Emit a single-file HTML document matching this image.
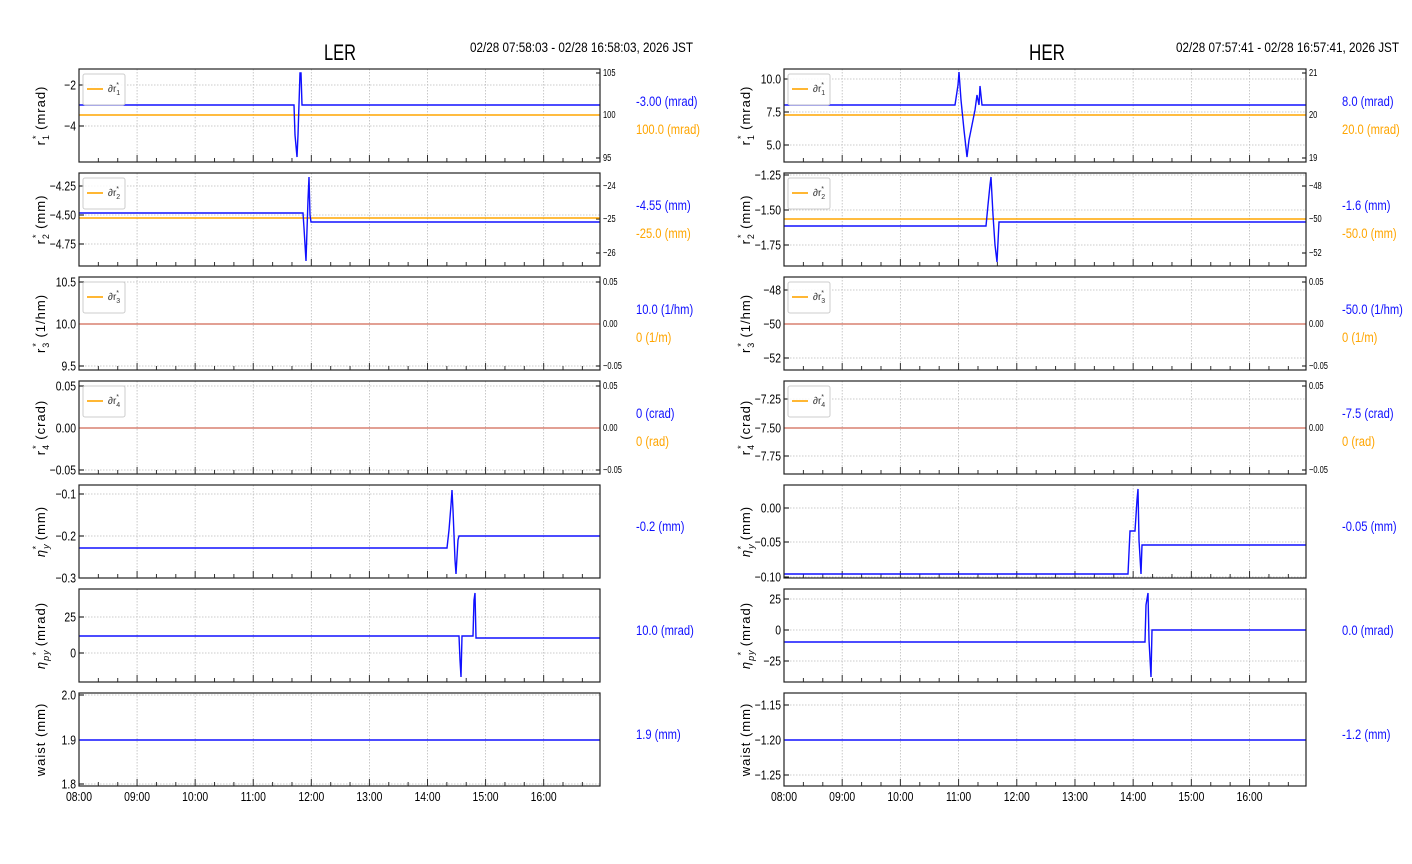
<!DOCTYPE html>
<html><head><meta charset="utf-8"><style>
html,body{margin:0;padding:0;background:#fff;width:1412px;height:864px;overflow:hidden}
svg text{font-family:"Liberation Sans",sans-serif}
</style></head><body>
<svg id="s" width="1412" height="864" xmlns="http://www.w3.org/2000/svg">
<text x="340" y="60" font-size="22" text-anchor="middle" textLength="32" lengthAdjust="spacingAndGlyphs">LER</text>
<text x="470" y="52" font-size="14" textLength="223" lengthAdjust="spacingAndGlyphs">02/28 07:58:03 - 02/28 16:58:03, 2026 JST</text>
<text x="1047" y="60" font-size="22" text-anchor="middle" textLength="36" lengthAdjust="spacingAndGlyphs">HER</text>
<text x="1176" y="52" font-size="14" textLength="223" lengthAdjust="spacingAndGlyphs">02/28 07:57:41 - 02/28 16:57:41, 2026 JST</text>
</svg>
<script>
var s=document.getElementById('s'),h='';
var tops=[69,173,277,381,485,589,693],PH=93;
function panel(x0,w,i,yt,rt,legend,ylab,lines,vals){
 var y0=tops[i],x1=x0+w,y1=y0+PH,hr=w/8.97;
 for(var k=0;k<9;k++){var x=x0+k*hr;h+='<line x1="'+x+'" y1="'+y0+'" x2="'+x+'" y2="'+y1+'" stroke="#bbb" stroke-width="0.8" stroke-dasharray="1.5,1.5"/>';}
 yt.forEach(function(t){h+='<line x1="'+x0+'" y1="'+t[1]+'" x2="'+x1+'" y2="'+t[1]+'" stroke="#bbb" stroke-width="0.8" stroke-dasharray="1.5,1.5"/>';
  h+='<line x1="'+x0+'" y1="'+t[1]+'" x2="'+(x0+5)+'" y2="'+t[1]+'" stroke="#000"/>';
  h+='<text x="'+(x0-3)+'" y="'+(t[1]+4.5)+'" font-size="13" text-anchor="end" transform="translate('+(x0-3)+',0) scale(0.8,1) translate('+(-(x0-3))+',0)">'+t[0]+'</text>';});
 for(var m=0;m<27;m++){var x=x0+m*hr/3;var L=m%3==0?7:4;h+='<line x1="'+x+'" y1="'+y1+'" x2="'+x+'" y2="'+(y1-L)+'" stroke="#333" stroke-width="1"/>';}
 if(rt){rt.forEach(function(t){h+='<line x1="'+x1+'" y1="'+t[1]+'" x2="'+(x1-4)+'" y2="'+t[1]+'" stroke="#000"/>';
  h+='<text x="'+(x1+3)+'" y="'+(t[1]+3)+'" font-size="10" transform="translate('+(x1+3)+',0) scale(0.75,1) translate('+(-(x1+3))+',0)">'+t[0]+'</text>';});}
 lines.forEach(function(l){h+='<polyline points="'+l[1]+'" fill="none" stroke="'+l[0]+'" stroke-width="1.4"/>';});
 if(legend){h+='<rect x="'+(x0+4)+'" y="'+(y0+5)+'" width="42" height="31" rx="2" fill="#fff" fill-opacity="0.85" stroke="#ccc"/>';
  h+='<line x1="'+(x0+8)+'" y1="'+(y0+20)+'" x2="'+(x0+24)+'" y2="'+(y0+20)+'" stroke="#ffa500" stroke-width="1.6"/>';
  h+='<text x="'+(x0+29)+'" y="'+(y0+23)+'" font-size="10" fill="#333">∂r<tspan font-size="7" dy="3">'+legend+'</tspan><tspan font-size="7" dx="-4" dy="-8">*</tspan></text>';}
 h+='<rect x="'+x0+'" y="'+y0+'" width="'+w+'" height="'+PH+'" fill="none" stroke="#222" stroke-width="1.2"/>';
 var cy=y0+PH/2,lx=x0-34;
 h+='<text font-size="13" text-anchor="middle" letter-spacing="1" transform="translate('+lx+','+cy+') rotate(-90)">'+ylab+'</text>';
 var off=vals.length==1?46:37;
 vals.forEach(function(v,j){h+='<text x="'+(x1+36)+'" y="'+(y0+off+j*28)+'" font-size="14" fill="'+v[1]+'" transform="translate('+(x1+36)+',0) scale(0.8,1) translate('+(-(x1+36))+',0)">'+v[0]+'</text>';});
}
var B='#1010ff',O='#ffa500',R='#d98070';
function r(n){return 'r<tspan font-size="9" dy="4">'+n+'</tspan><tspan font-size="9" dx="-5" dy="-10">*</tspan><tspan dy="6"> </tspan>';}
function eta(n){return '<tspan font-style="italic">η</tspan><tspan font-size="9" dy="4" font-style="italic">'+n+'</tspan><tspan font-size="9" dx="-6" dy="-10">*</tspan><tspan dy="6"> </tspan>';}
var L=79,W=521,Rx=784,RW=522;
panel(L,W,0,[['−2',85],['−4',126]],[['105',73],['100',115],['95',158]],'1',r(1)+'(mrad)',
 [[O,L+','+115+' '+(L+W)+',115'],[B,L+',105 294,105 295,135 297,157 298,135 300,73 301,73 302,105 600,105']],[['-3.00 (mrad)',B],['100.0 (mrad)',O]]);
panel(L,W,1,[['−4.25',186],['−4.50',215],['−4.75',244]],[['−24',186],['−25',219],['−26',253]],'2',r(2)+'(mm)',
 [[O,L+',218 600,218'],[B,L+',213 303,213 304,228 306,261 307,230 308,200 309,177 310,215 311,222 600,222']],[['-4.55 (mm)',B],['-25.0 (mm)',O]]);
panel(L,W,2,[['10.5',282],['10.0',324],['9.5',366]],[['0.05',282],['0.00',324],['−0.05',366]],'3',r(3)+'(1/hm)',
 [[R,L+',324 600,324']],[['10.0 (1/hm)',B],['0 (1/m)',O]]);
panel(L,W,3,[['0.05',386],['0.00',428],['−0.05',470]],[['0.05',386],['0.00',428],['−0.05',470]],'4',r(4)+'(crad)',
 [[R,L+',428 600,428']],[['0 (crad)',B],['0 (rad)',O]]);
panel(L,W,4,[['−0.1',494],['−0.2',536],['−0.3',578]],null,null,eta('y')+'(mm)',
 [[B,L+',548 447,548 449,530 451,505 452,490 453,510 455,560 456,574 458,540 459,536 600,536']],[['-0.2 (mm)',B]]);
panel(L,W,5,[['25',617],['0',653]],null,null,eta('py')+'(mrad)',
 [[B,L+',636 459,636 460,660 461,677 462,636 473,636 474,600 475,593 476,638 600,638']],[['10.0 (mrad)',B]]);
panel(L,W,6,[['2.0',695],['1.9',740],['1.8',784]],null,null,'waist (mm)',
 [[B,L+',740 600,740']],[['1.9 (mm)',B]]);
panel(Rx,RW,0,[['10.0',79],['7.5',112],['5.0',145]],[['21',73],['20',115],['19',158]],'1',r(1)+'(mrad)',
 [[O,Rx+',115 1306,115'],[B,Rx+',105 955,105 958,85 959,72 961,100 964,130 967,157 969,140 972,125 975,110 977,95 979,105 980,86 982,105 1306,105']],[['8.0 (mrad)',B],['20.0 (mrad)',O]]);
panel(Rx,RW,1,[['−1.25',175],['−1.50',210],['−1.75',245]],[['−48',186],['−50',219],['−52',253]],'2',r(2)+'(mm)',
 [[O,Rx+',219 1306,219'],[B,Rx+',226 986,226 988,205 990,185 991,177 993,215 995,245 997,262 999,222 1306,222']],[['-1.6 (mm)',B],['-50.0 (mm)',O]]);
panel(Rx,RW,2,[['−48',290],['−50',324],['−52',358]],[['0.05',282],['0.00',324],['−0.05',366]],'3',r(3)+'(1/hm)',
 [[R,Rx+',324 1306,324']],[['-50.0 (1/hm)',B],['0 (1/m)',O]]);
panel(Rx,RW,3,[['−7.25',399],['−7.50',428],['−7.75',456]],[['0.05',386],['0.00',428],['−0.05',470]],'4',r(4)+'(crad)',
 [[R,Rx+',428 1306,428']],[['-7.5 (crad)',B],['0 (rad)',O]]);
panel(Rx,RW,4,[['0.00',508],['−0.05',542],['−0.10',577]],null,null,eta('y')+'(mm)',
 [[B,Rx+',574 1128,574 1130,531 1135,531 1137,500 1138,489 1139,540 1141,574 1142,545 1306,545']],[['-0.05 (mm)',B]]);
panel(Rx,RW,5,[['25',599],['0',630],['−25',661]],null,null,eta('py')+'(mrad)',
 [[B,Rx+',642 1145,642 1146,605 1148,593 1149,640 1151,677 1152,630 1306,630']],[['0.0 (mrad)',B]]);
panel(Rx,RW,6,[['−1.15',705],['−1.20',740],['−1.25',775]],null,null,'waist (mm)',
 [[B,Rx+',740 1306,740']],[['-1.2 (mm)',B]]);
var t=['08:00','09:00','10:00','11:00','12:00','13:00','14:00','15:00','16:00'];
[[L,W],[Rx,RW]].forEach(function(p){t.forEach(function(s2,k){var x=p[0]+k*p[1]/8.97;h+='<text x="'+x+'" y="801" font-size="13" text-anchor="middle" transform="translate('+x+',0) scale(0.8,1) translate('+(-x)+',0)">'+s2+'</text>';});});
s.insertAdjacentHTML('beforeend',h);
</script>
</body></html>
